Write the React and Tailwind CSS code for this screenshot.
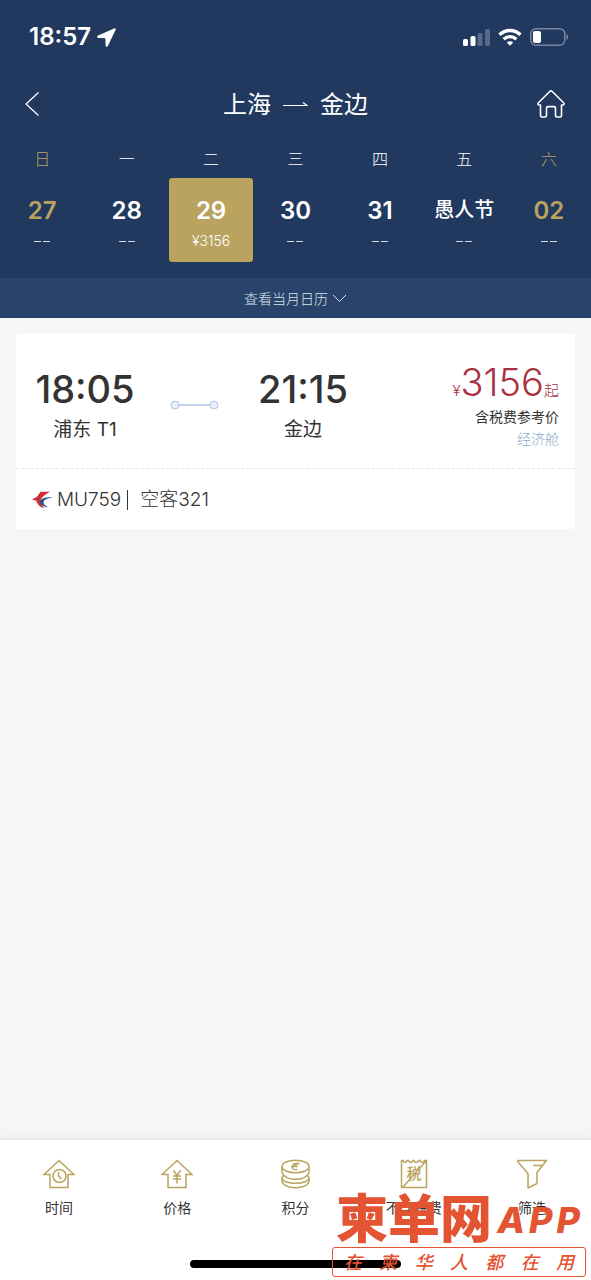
import React, { useState } from 'react';

const days = [
  { week: '日', label: '27', weekend: true },
  { week: '一', label: '28' },
  { week: '二', label: '29', price: '¥3156' },
  { week: '三', label: '30' },
  { week: '四', label: '31' },
  { week: '五', label: '愚人节', festival: true },
  { week: '六', label: '02', weekend: true },
];

const slogan = ['在', '柬', '华', '人', '都', '在', '用'];

const StatusBar = () => (
  <div className="flex h-[74px] items-center justify-between pl-[29px] pr-[22px]">
    <div className="flex items-center gap-[6px] text-[24px] font-semibold leading-7">
      <span>18:57</span>
      <svg width="19" height="19" viewBox="0 0 19 19" fill="currentColor">
        <path d="M17.200.4 1 7.600c-1.300.7-1.100 2.300.4 2.400l7 .2.2 7.200c.1 1.600 1.800 1.700 2.400.3L18.600 1.800c.4-1-.4-1.800-1.400-1.400z" />
      </svg>
    </div>
    <div className="flex items-center gap-2">
      <svg width="28" height="18" viewBox="0 0 28 18" fill="currentColor">
        <rect x="1" y="11" width="5" height="7" rx="1.500" />
        <rect x="8.500" y="8" width="5" height="10" rx="1.500" />
        <rect x="15.500" y="5" width="5" height="13" rx="1.500" opacity="0.25" />
        <rect x="23" y="1" width="5" height="17" rx="1.500" opacity="0.25" />
      </svg>
      <svg width="24" height="18" viewBox="0 0 24 18" fill="none" stroke="currentColor" strokeWidth="3.400">
        <path d="M1.500 6.800a15 15 0 0 1 21 0" />
        <path d="M5.700 11.200a9 9 0 0 1 12.600 0" />
        <path d="M12 17.800l-3.200-3.300a4.600 4.600 0 0 1 6.400 0z" fill="currentColor" stroke="none" />
      </svg>
      <svg width="39" height="18" viewBox="0 0 39 18">
        <rect x="0.800" y="0.800" width="34" height="16.400" rx="5" fill="none" stroke="#7787a2" strokeWidth="1.500" />
        <rect x="3" y="3" width="8" height="12" rx="2" fill="#fff" />
        <path d="M36.500 6c2.200 1 2.200 5 0 6z" fill="#7787a2" />
      </svg>
    </div>
  </div>
);

const TitleBar = () => (
  <div className="flex h-[60px] items-center justify-between px-6">
    <button aria-label="返回" className="w-8">
      <svg width="16" height="24" viewBox="0 0 16 24" fill="none" stroke="currentColor" strokeWidth="1.300">
        <path d="M14.500.5 2 12l12.500 11.500" />
      </svg>
    </button>
    <h1 className="flex items-center gap-3 pt-[2px] text-[24px] font-normal leading-8">
      <span>上海</span>
      <svg width="25" height="8" viewBox="0 0 25 8" fill="none" stroke="currentColor" strokeWidth="1.200">
        <path d="M0 4.500h24l-4-3" />
      </svg>
      <span>金边</span>
    </h1>
    <button aria-label="首页" className="flex w-8 justify-end">
      <svg width="32" height="28" viewBox="0 0 32 28" fill="none" stroke="currentColor" strokeWidth="1.600" strokeLinejoin="round">
        <path d="M16 .9c.5 0 .9.2 1.300.6l11.300 11.200c1 1 .5 2.300-.8 2.300h-1.300v10.500c0 1-.6 1.500-1.500 1.500h-3c-1 0-1.500-.5-1.500-1.500v-7.300c0-1-.5-1.600-1.500-1.600h-6c-1 0-1.500.6-1.500 1.600v7.300c0 1-.5 1.500-1.500 1.500H7c-.9 0-1.500-.5-1.500-1.500V15H4.200c-1.300 0-1.800-1.300-.8-2.300L14.700 1.500c.4-.4.8-.6 1.300-.6z" />
      </svg>
    </button>
  </div>
);

const Calendar = ({ selected, onSelect }) => (
  <div className="grid grid-cols-7 pt-3 pb-4 text-center">
    {days.map((day, i) => (
      <div key={day.label}>
        <div className={`h-8 text-[16px] font-light leading-[26px] ${day.weekend ? 'text-[#b9a35e]' : ''}`}>{day.week}</div>
        <button
          onClick={() => onSelect(i)}
          className={`flex h-[84px] w-full flex-col items-center rounded-[3px] pt-4 ${i === selected ? 'bg-[#b9a35e]' : ''}`}
        >
          <span
            className={`whitespace-nowrap leading-[33px] ${day.festival ? 'text-[20px] font-medium' : 'text-[24px] font-semibold'} ${
              day.weekend ? 'text-[#b9a35e]' : ''
            }`}
          >
            {day.label}
          </span>
          {day.price ? (
            <span className="text-[14px] font-light leading-7">{day.price}</span>
          ) : (
            <span className="flex h-[29px] items-center gap-[2px]">
              <span className="h-px w-[7px] bg-[#d3d9e3]" />
              <span className="h-px w-[7px] bg-[#d3d9e3]" />
            </span>
          )}
        </button>
      </div>
    ))}
  </div>
);

const AirlineLogo = () => (
  <svg width="21" height="18" viewBox="0 0 21 18">
    <path d="M18 .8H8.500L5 5.800 0 8.600l4.200 1.200C5.500 13.500 8 16.500 12 17.200L8.300 11C8.300 7.500 12 4 18 .8z" fill="#cf3038" />
    <path d="M21 6.300C14.500 5.800 9 7.300 8 10c-.4 3 3 5.700 8 6.200-3.500-1.800-5-3.800-4.400-5.500.7-2 5-3.300 9.400-4.400z" fill="#244a8f" />
    <path d="M20 6.900c-4.500.4-9 1.600-9.500 4 .2-1.500 4-3 9.500-4z" fill="#fff" />
  </svg>
);

const FlightCard = () => (
  <article className="mx-4 mt-4 rounded-[3px] bg-white text-[#333]">
    <div className="flex h-[134px] pt-8 pr-4">
      <div className="w-[138px] text-center">
        <div className="text-[38px] font-medium leading-[46px]">18:05</div>
        <div className="text-[19px] leading-9">浦东 T1</div>
      </div>
      <svg className="ml-4 mt-[34px]" width="49" height="10" viewBox="0 0 49 10" fill="#e6effa" stroke="#afc6e4">
        <path d="M9 5h31" strokeWidth="1.500" />
        <circle cx="5" cy="5" r="4" />
        <circle cx="44" cy="5" r="4" />
      </svg>
      <div className="ml-4 w-[136px] text-center">
        <div className="text-[38px] font-medium leading-[46px]">21:15</div>
        <div className="text-[19px] leading-9">金边</div>
      </div>
      <div className="ml-auto text-right text-[14px] leading-[22px]">
        <div className="flex h-10 items-baseline justify-end leading-8 text-[#a93242]">
          <span className="text-[15px] font-light">¥</span>
          <span className="text-[38px] font-light">3156</span>
          <span className="text-[15px] font-light">起</span>
        </div>
        <div>含税费参考价</div>
        <div className="font-light text-[#8aa8c8]">经济舱</div>
      </div>
    </div>
    <div className="flex h-[61px] items-center border-t border-dashed border-[#e6e6e6] px-4 pt-[2px] text-[19px] font-light">
      <AirlineLogo />
      <span className="ml-1">MU759</span>
      <span className="ml-[6px] mr-3 h-5 w-px bg-[#333]" />
      <span>空客321</span>
    </div>
  </article>
);

const TimeIcon = () => (
  <>
    <path d="M16 1.500 1 15.500h6v13h18v-13h6z" />
    <circle cx="16.500" cy="17" r="6.500" />
    <path d="M15.500 13v4l3 3" />
  </>
);

const PriceIcon = () => (
  <>
    <path d="M16 1.500 1 15.500h6v13h18v-13h6z" />
    <path d="M12.500 11.500l3.500 5 3.500-5M12 17h8M12 20h8M16 16.500v8" />
  </>
);

const PointsIcon = () => (
  <>
    <ellipse cx="16.500" cy="7.500" rx="13.500" ry="6.300" />
    <path d="M3 7.500v5.500c0 1.500.5 2.500 2 3.500 5 5 18 5 23 0 1.500-1 2-2 2-3.500V7.500" />
    <path d="M5 16.500c-1.500.5-2 1.500-2 2.500v2.500c0 9.500 27 9.500 27 0V19c0-1-.5-2-2-2.500" />
    <path d="M3 19c1 7 26 7 27 0" />
    <path d="M20.500 4.500c-4-1-6.500 1-7 3s1 3.500 4.500 3M12 7.500h6.500M13.500 5.500l5 .3" strokeWidth="1.300" />
  </>
);

const TaxIcon = () => (
  <>
    <path d="M3.500 1.500v27h25v-27h-2c-.5 2.500-4 2.500-4.500 0h-1.500c-.5 2.500-4 2.500-4.500 0h-1c-.5 2.500-4 2.500-4.500 0H9c-.5 2.500-3.500 2.500-4 0zM5 28 28 2" />
    <text x="16" y="20" fontSize="15" fontWeight="500" textAnchor="middle" fill="#b9a35e" stroke="none">税</text>
  </>
);

const FilterIcon = () => (
  <path d="M2 1.500h28.500L21 13.500v11L12 29V14.500L2 3zM17 6.500h9.500" strokeLinejoin="round" />
);

const tabs = [
  { label: '时间', Icon: TimeIcon },
  { label: '价格', Icon: PriceIcon },
  { label: '积分', Icon: PointsIcon },
  { label: '不含税费', Icon: TaxIcon },
  { label: '筛选', Icon: FilterIcon },
];

const Watermark = () => (
  <div className="pointer-events-none absolute bottom-[3px] right-[5px] w-[254px] text-[#e35433]">
    <div className="flex h-[54px] items-center justify-between pl-1 pr-[6px] font-black leading-[50px]">
      <span className="text-[52px]">柬单网</span>
      <span className="flex gap-1 text-[36px] font-extrabold italic">
        <span>A</span>
        <span>P</span>
        <span>P</span>
      </span>
    </div>
    <div className="flex h-[30px] items-center justify-between rounded-[3px] border border-[#e35433] px-[11px] text-[18px] font-medium italic">
      {slogan.map((char, i) => (
        <span key={i}>{char}</span>
      ))}
    </div>
  </div>
);

const App = () => {
  const [selected, setSelected] = useState(2);

  return (
    <div className="flex min-h-screen flex-col bg-[#f6f6f6] font-['Inter','Noto_Sans_CJK_SC',sans-serif]">
      {/* Header */}
      <header className="bg-[#21385f] text-white">
        <StatusBar />
        <TitleBar />
        <Calendar selected={selected} onSelect={setSelected} />
        <button className="flex h-10 w-full items-center justify-center gap-1 bg-[#2a436a] text-[14px] font-light text-[#dce3ee]">
          查看当月日历
          <svg width="15" height="9" viewBox="0 0 15 9" fill="none" stroke="currentColor">
            <path d="M1 1l6.500 6.500L14 1" />
          </svg>
        </button>
      </header>

      {/* Flights */}
      <main className="flex-1">
        <FlightCard />
      </main>

      {/* Bottom bar */}
      <footer className="relative bg-white shadow-[0_0_8px_rgba(0,0,0,0.12)]">
        <nav className="grid h-[120px] grid-cols-5 pt-[19px] text-[14px] text-[#333]">
          {tabs.map(({ label, Icon }) => (
            <button key={label} className="flex flex-col items-center gap-[7px]">
              <svg width="32" height="30" viewBox="0 0 32 30" fill="none" stroke="#b9a35e" strokeWidth="1.500">
                <Icon />
              </svg>
              <span className="leading-6">{label}</span>
            </button>
          ))}
        </nav>
        <div className="h-5">
          <div className="mx-auto h-2 w-[211px] rounded-full bg-black" />
        </div>
        <Watermark />
      </footer>
    </div>
  );
};

export default App;
